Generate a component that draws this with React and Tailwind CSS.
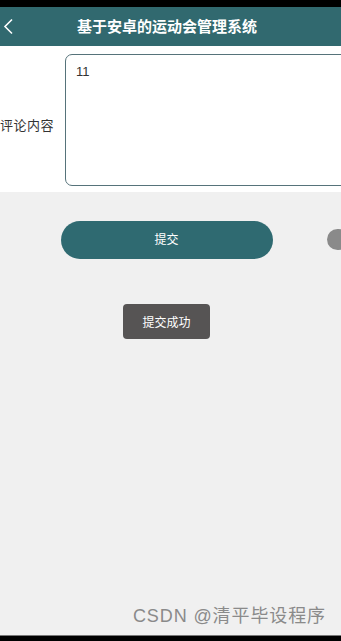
import React from "react";

export default function App() {
  const font = { fontFamily: '"Noto Sans CJK SC", "Noto Sans", sans-serif' };
  return (
    <div className="w-[341px] h-[641px] flex flex-col bg-[#f0f0f0] overflow-hidden relative" style={font}>
      <div className="h-[7px] bg-black shrink-0" />
      <div className="h-[39px] bg-[#31696f] flex items-center relative shrink-0">
        <svg className="absolute left-[2px] top-[11px]" width="12" height="17" viewBox="0 0 12 17">
          <path d="M10 1.5 L3 8.5 L10 15.5" fill="none" stroke="white" strokeWidth="1.6" />
        </svg>
        <div className="w-full text-center text-white text-[15px] font-bold pr-[7px]">基于安卓的运动会管理系统</div>
      </div>
      <div className="h-[146px] bg-white flex items-center shrink-0">
        <div className="w-[65px] text-[13px] tracking-[0.5px] text-[#333] pt-[12px] whitespace-nowrap">评论内容</div>
        <div className="flex-1 h-[132px] mt-[2px] border border-[#56737a] rounded-[7px] mr-[-8px] px-[10px] py-[7px] text-[13px] text-[#333]" style={{ fontFamily: '"Liberation Sans", sans-serif' }}>11</div>
      </div>
      <div className="relative flex-1">
        <div className="flex justify-center mt-[29px] pr-[8px]">
          <div className="w-[212px] h-[38px] rounded-full bg-[#2f6a71] flex items-center justify-center text-white text-[12px] pb-[2px]">提交</div>
        </div>
        <div className="absolute left-[327px] top-[37px] w-[22px] h-[21px] rounded-full bg-[#8a8a8a] blur-[0.5px]" />
        <div className="flex justify-center mt-[45px] pr-[8px]">
          <div className="w-[87px] h-[35px] rounded-[4px] bg-[#565454] flex items-center justify-center text-white text-[12px]">提交成功</div>
        </div>
        <div className="absolute right-[15px] bottom-[5px] text-[18px] text-[#8a8a8a] tracking-[0.9px]" style={{ fontFamily: '"Liberation Sans", "Noto Sans CJK SC", sans-serif' }}>CSDN @清平毕设程序</div>
      </div>
      <div className="h-[1px] bg-[#777] shrink-0" />
      <div className="h-[5px] bg-black shrink-0" />
    </div>
  );
}
